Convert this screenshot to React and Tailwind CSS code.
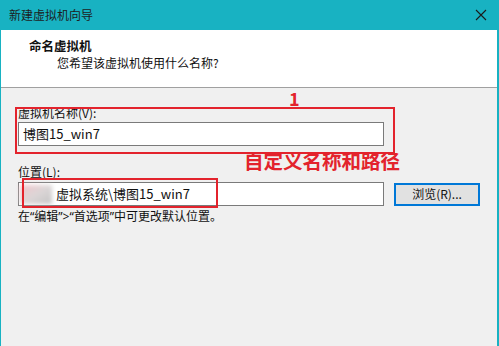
import React from 'react';

const font = { fontFamily: '"Noto Sans CJK SC", "Noto Sans", sans-serif' };

const CloseIcon = () => (
  <svg width="12" height="12" viewBox="0 0 12 12" className="text-[#1a1a1a]">
    <path d="M1 1 L11 11 M11 1 L1 11" stroke="currentColor" strokeWidth="1.1" fill="none" />
  </svg>
);

const App = () => {
  return (
    <div
      className="relative w-[499px] h-[346px] overflow-hidden bg-[#f0f0f0] border-l border-r-2 border-[#18b2c2] text-[12px] text-[#111]"
      style={font}
    >
      {/* title bar */}
      <div className="h-[30px] bg-[#18b2c2] flex items-center justify-between pl-[8px] pr-[10px]">
        <span className="text-[12px] leading-none text-[#1d1d1d]">新建虚拟机向导</span>
        <CloseIcon />
      </div>

      {/* header */}
      <div className="h-[58px] bg-white border-b border-[#a0a0a0] pt-[8px] pl-[28px]">
        <p className="font-bold text-[12.5px] leading-[16px]">命名虚拟机</p>
        <p className="pl-[28px] mt-[1px] leading-[16px]">您希望该虚拟机使用什么名称?</p>
      </div>

      {/* body */}
      <div className="pl-[17px] pt-[17px] flex flex-col">
        <label className="leading-[16px]">虚拟机名称(V):</label>
        <div className="mt-[1px] w-[366px] h-[24px] bg-white border border-[#7a7a7a] flex items-center pl-[4px] text-[13px]">
          博图15_win7
        </div>

        <label className="mt-[18px] leading-[16px]">位置(L):</label>
        <div className="mt-[2px] flex items-center">
          <div className="relative w-[366px] h-[24px] bg-white border border-[#7a7a7a] flex items-center pl-[37px] text-[13px]">
            <div className="absolute left-[1px] top-[2px] w-[32px] h-[19px] blur-[2px] bg-gradient-to-br from-[#f1c4cb] via-[#dcd6d7] to-[#c4c4c4]" />
            虚拟系统\博图15_win7
          </div>
          <button className="ml-[10px] w-[86px] h-[23px] bg-[#e1e1e1] border-2 border-[#0078d7] flex items-center justify-center text-[12px] leading-none">
            浏览(R)...
          </button>
        </div>

        <p
          className="mt-[3px] leading-[16px]"
          style={{ fontFamily: '"Noto Sans", "Noto Sans CJK SC", sans-serif' }}
        >
          在“编辑”&gt;“首选项”中可更改默认位置。
        </p>
      </div>

      {/* annotations */}
      <div className="absolute left-[14px] top-[107px] w-[380px] h-[47px] border-2 border-[#e3232c]" />
      <div className="absolute left-[21px] top-[178px] w-[196px] h-[30px] border-2 border-[#e3232c]" />
      <span className="absolute left-[288px] top-[89px] text-[18px] font-bold leading-none text-[#e3232c]">1</span>
      <span className="absolute left-[243px] top-[151px] text-[19.5px] font-bold leading-none text-[#e3232c]">自定义名称和路径</span>
    </div>
  );
};

export default App;
